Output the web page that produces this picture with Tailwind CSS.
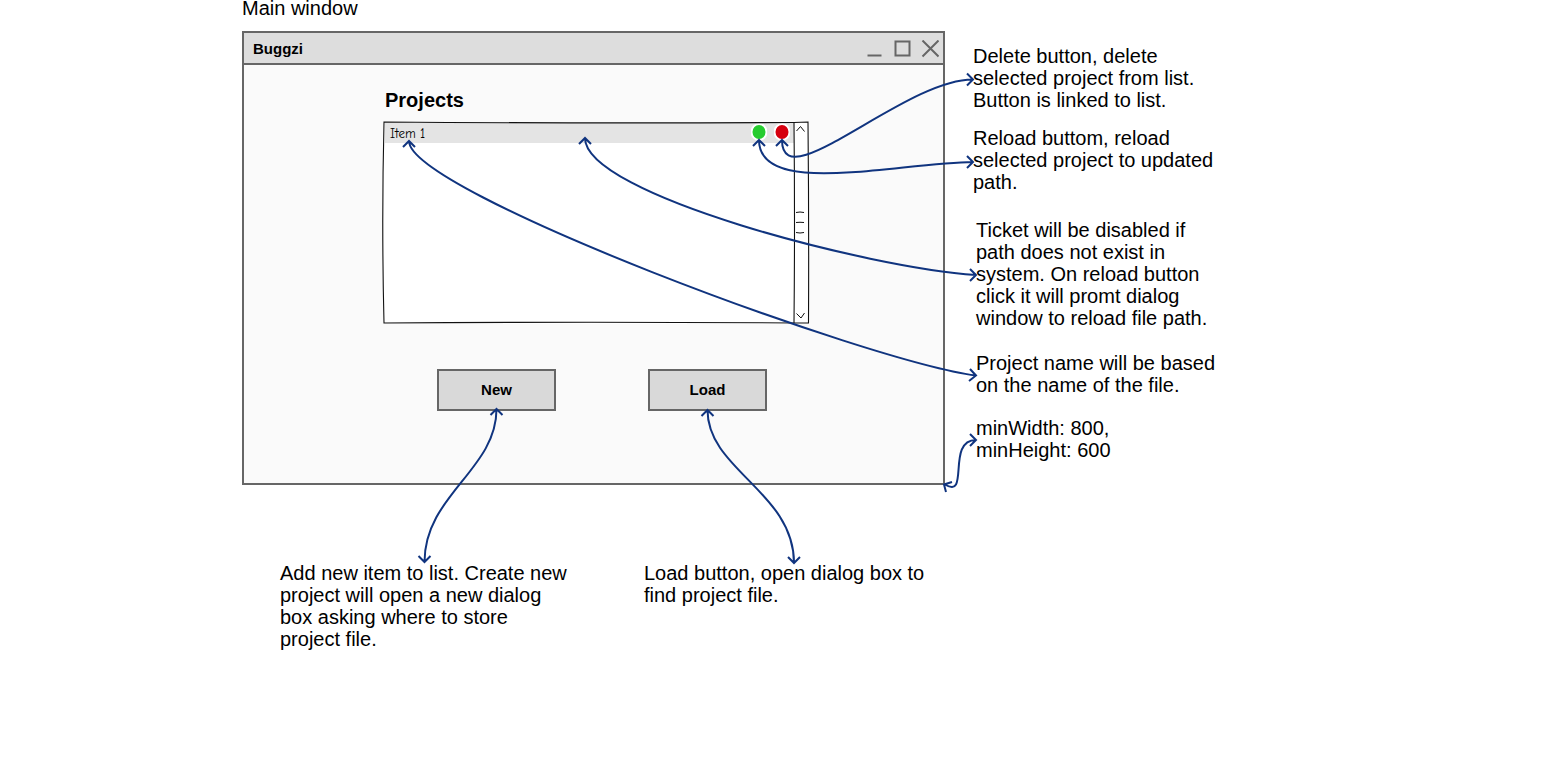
<!DOCTYPE html>
<html lang="en">
<head>
<meta charset="utf-8">
<meta name="viewport" content="width=device-width, initial-scale=1">
<title>Main window</title>
<script src="https://cdn.jsdelivr.net/npm/@tailwindcss/browser@4"></script>
</head>
<body class="bg-white">
<main class="relative flow-root pl-[242px] font-['Liberation_Sans',Arial,sans-serif] text-[20px] leading-[22px] text-black">
  <h1 class="-mt-[3px]">Main window</h1>

  <div class="mt-3 flex items-start">
    <section class="flex h-[454px] w-[703px] shrink-0 flex-col border-2 border-[#666] bg-[#fafafa]">
      <header class="flex h-8 items-center justify-between border-b-2 border-[#666] bg-[#ddd] pt-px pr-1 pl-[9px]">
        <span class="text-[15px] font-bold">Buggzi</span>
        <div class="flex items-center gap-2.5">
          <button aria-label="Minimize"><svg class="block size-[18px]" viewBox="0 0 18 18" fill="none" stroke="#666" stroke-width="2"><path d="M2.5 15.5h14"/></svg></button>
          <button aria-label="Maximize"><svg class="block size-[18px]" viewBox="0 0 18 18" fill="none" stroke="#666" stroke-width="2"><path d="M2.5 1.5h14v14h-14z"/></svg></button>
          <button aria-label="Close"><svg class="block size-[18px]" viewBox="0 0 18 18" fill="none" stroke="#666" stroke-width="2"><path d="M1.5 0.5l16 16M17.5 0.5l-16 16"/></svg></button>
        </div>
      </header>
      <div class="pt-6 pl-[140px]">
        <h2 class="pl-px font-bold">Projects</h2>
        <div class="relative mt-[11px] flex h-[202px] w-[425px] bg-white">
          <ul class="flex-1 pt-px pl-px">
            <li class="flex h-5 items-start justify-between bg-[#e4e4e4] pr-1 pl-[5px]">
              <span class="font-['Comic_Sans_MS','Comic_Neue','Noto_Sans',sans-serif] text-[13px] font-medium">Item 1</span>
              <span class="flex gap-[7px]">
                <button aria-label="Reload project"><svg class="block h-[18px] w-4" viewBox="0 0 16 18"><ellipse cx="8" cy="9" rx="7.5" ry="8" fill="#26cc2f" stroke="#fff" stroke-width="2"/></svg></button>
                <button aria-label="Delete project"><svg class="block h-[18px] w-4" viewBox="0 0 16 18"><ellipse cx="8" cy="9" rx="7.5" ry="8" fill="#d6000f" stroke="#fff" stroke-width="2"/></svg></button>
              </span>
            </li>
          </ul>
          <div class="w-[15px]"></div>
          <!-- hand-drawn list frame and scrollbar -->
          <svg class="pointer-events-none absolute inset-0 size-full overflow-visible" viewBox="0 0 425 202" fill="none" stroke="#111" stroke-width="1.1">
            <path d="M0 0Q210 1.5 410 0.5L424 0Q425 100 424.5 201L410 201Q210 199.5 0 201Q-2.5 100 0 0Z"/>
            <path d="M410 0Q411 100 410 201"/>
            <path d="M412.5 9l4-4.5 4 5M412.5 191.5l4.5 4.5 3.5-5M412 90.5q4-1 8 0M412 100.5q4-.5 8 0M412 110.5q4 1 8 0" stroke-width="1"/>
          </svg>
        </div>
        <div class="mt-[45px] flex gap-[92px] pl-[53px] text-[15px] font-bold">
          <button class="h-[42px] w-[119px] border-2 border-[#666] bg-[#d9d9d9] font-bold">New</button>
          <button class="h-[42px] w-[119px] border-2 border-[#666] bg-[#d9d9d9] font-bold">Load</button>
        </div>
      </div>
    </section>

    <aside class="pt-3.5 pl-7">
      <p>Delete button, delete<br>selected project from list.<br>Button is linked to list.</p>
      <p class="mt-4">Reload buttom, reload<br>selected project to updated<br>path.</p>
      <div class="pl-[3px]">
        <p class="mt-[26px]">Ticket will be disabled if<br>path does not exist in<br>system. On reload button<br>click it will promt dialog<br>window to reload file path.</p>
        <p class="mt-[23px]">Project name will be based<br>on the name of the file.</p>
        <p class="mt-[21px]">minWidth: 800,<br>minHeight: 600</p>
      </div>
    </aside>
  </div>

  <div class="mt-[77px] flex gap-16 pl-[38px]">
    <p class="w-[300px]">Add new item to list. Create new<br>project will open a new dialog<br>box asking where to store<br>project file.</p>
    <p class="w-[300px]">Load button, open dialog box to<br>find project file.</p>
  </div>

  <!-- connectors between controls and their notes -->
  <svg class="pointer-events-none absolute top-0 left-0 h-[600px] w-[1000px]" viewBox="0 0 1000 600" fill="none" stroke="#10347f" stroke-width="2">
    <path d="M782 140C782 200 905 79 973 79.5M776 146l6-6 6 6M967 73.5l6 6-6 6"/>
    <path d="M759 140C759 198 895 163 973 162M753 146l6-6 6 6M967 156l6 6-6 6"/>
    <path d="M585 138C585 195 870 268 976 275M579 144l6-6 6 6M970 269l6 6-6 6"/>
    <path d="M409 141C409 192 870 362 976 375.5M403 147l6-6 6 6M970 369l6 6.5-7 5.5"/>
    <path d="M496.5 409C496.5 470 424.5 495 424.5 562M490.5 415l6-6 6 6M418.5 556l6 6 6-6"/>
    <path d="M707.5 410C707.5 470 794 492 794 563M701.5 416l6-6 6 6M788 557l6 6 6-6"/>
    <path d="M945 484.5C970 500 946 440 976 440M952 482l-8 2.5 2 7.5M970 434l6 6-6 6"/>
  </svg>
</main>
</body>
</html>
